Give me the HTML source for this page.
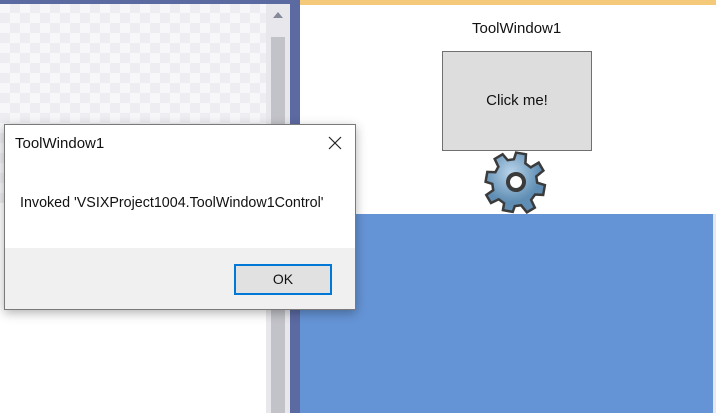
<!DOCTYPE html>
<html><head><style>
body{margin:0;width:716px;height:413px;position:relative;overflow:hidden;background:#fff;font-family:"Segoe UI","Liberation Sans",sans-serif;}
.a{position:absolute;}
.checker{background-color:#f7f7f9;background-image:linear-gradient(45deg,#eeeef2 25%,transparent 25%,transparent 75%,#eeeef2 75%),linear-gradient(45deg,#eeeef2 25%,transparent 25%,transparent 75%,#eeeef2 75%);background-size:20px 20px;background-position:0 0,10px 10px;}
</style></head><body>
<div class="a checker" style="left:0;top:3px;width:266px;height:200px;"></div>
<div class="a" style="left:0;top:0;width:300px;height:4px;background:#5c6aa2;"></div>
<div class="a" style="left:266px;top:4px;width:24px;height:409px;background:#e8e8ec;"></div>
<div class="a" style="left:271px;top:37px;width:14px;height:376px;background:#c2c3c9;"></div>
<div class="a" style="left:273px;top:12px;width:0;height:0;border-left:5px solid transparent;border-right:5px solid transparent;border-bottom:6px solid #868999;"></div>
<div class="a" style="left:290px;top:0;width:10px;height:413px;background:#5c6aa2;"></div>
<div class="a" style="left:300px;top:0;width:416px;height:5px;background:#f5c97a;"></div>
<div class="a" style="left:300px;top:214px;width:413px;height:199px;background:#6594d6;"></div>
<div class="a" style="left:713px;top:214px;width:3px;height:199px;background:#e8e8ec;"></div>
<div class="a" style="left:472px;top:20px;font-size:15px;color:#111;">ToolWindow1</div>
<div class="a" style="left:442px;top:51px;width:148px;height:98px;background:#dddddd;border:1px solid #707070;font-size:15px;color:#111;text-align:center;line-height:98px;">Click me!</div>
<svg class="a" style="left:484px;top:150px" width="64" height="64" viewBox="-32 -32 64 64">
<defs><radialGradient id="g" cx="40%" cy="35%"><stop offset="0" stop-color="#b8d4ea"/><stop offset="1" stop-color="#5f8db3"/></radialGradient></defs>
<g transform="rotate(10)">
<path fill="url(#g)" stroke="#3b3b3b" stroke-width="2.5" d="M-5,-29 L5,-29 L6,-20 L12,-17 L19,-23 L25,-16 L19,-9 L21,-3 L29,-2 L29,8 L21,9 L18,15 L23,22 L16,28 L9,22 L3,24 L2,30 L-8,30 L-8,23 L-14,20 L-21,25 L-27,18 L-21,12 L-23,6 L-30,5 L-30,-5 L-22,-6 L-20,-12 L-25,-19 L-18,-25 L-12,-20 L-6,-22 Z"/>
<circle r="8" fill="#fff" stroke="#3b3b3b" stroke-width="4"/>
</g></svg>
<div class="a" style="left:4px;top:124px;width:350px;height:184px;background:#fff;border:1px solid #7a7a7a;box-shadow:0 3px 10px rgba(0,0,0,.3);">
 <div class="a" style="left:15px;top:10px;font-size:15px;color:#111;"></div>
 <div class="a" style="left:10px;top:10px;font-size:15px;color:#111;">ToolWindow1</div>
 <svg class="a" style="left:323px;top:11px" width="14" height="14"><path d="M1,1L13,13M13,1L1,13" stroke="#222" stroke-width="1.2"/></svg>
 <div class="a" style="left:15px;top:70px;font-size:14.3px;color:#111;">Invoked 'VSIXProject1004.ToolWindow1Control'</div>
 <div class="a" style="left:0;top:123px;width:350px;height:61px;background:#f0f0f0;"></div>
 <div class="a" style="left:229px;top:139px;width:94px;height:27px;background:#e1e1e1;border:2px solid #0078d7;font-size:14px;text-align:center;line-height:27px;color:#111;">OK</div>
</div>
</body></html>
